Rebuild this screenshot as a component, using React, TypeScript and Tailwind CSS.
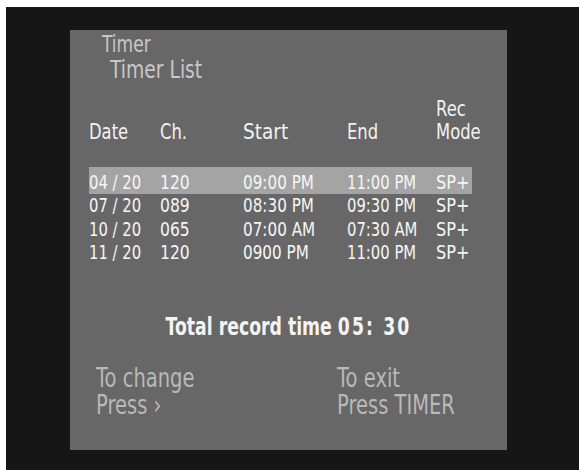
import type { ReactNode } from "react";

const osd = { fontFamily: '"DejaVu Sans", sans-serif' };

type Row = { date: string; ch: string; start: string; end: string; mode: string; active?: boolean };

const rows: Row[] = [
  { date: "04 / 20", ch: "120", start: "09:00 PM", end: "11:00 PM", mode: "SP+", active: true },
  { date: "07 / 20", ch: "089", start: "08:30 PM", end: "09:30 PM", mode: "SP+" },
  { date: "10 / 20", ch: "065", start: "07:00 AM", end: "07:30 AM", mode: "SP+" },
  { date: "11 / 20", ch: "120", start: "0900 PM", end: "11:00 PM", mode: "SP+" },
];

const cols = "grid grid-cols-[71px_83px_104px_89px_1fr]";

/** OSD glyphs are much narrower than anything installed, so squeeze them. */
function Narrow({ children, className = "origin-left scale-x-[0.78]" }: { children: ReactNode; className?: string }) {
  return <span className={`inline-block whitespace-nowrap ${className}`}>{children}</span>;
}

export default function App() {
  return (
    <div className="flex h-[470px] w-[579px] flex-col bg-white pl-[6px] pt-[7px]" style={osd}>
      <div className="flex-1 bg-[#161616] pl-[64px] pt-[23px]">
        <div className="flex h-[420px] w-[437px] flex-col bg-[#676767] pt-[2px]">
          <div className="h-[24px] pl-[32px] text-[23px] leading-[24px] text-[#c8c8c8]">
            <Narrow className="origin-left scale-x-[0.74]">Timer</Narrow>
          </div>
          <div className="mt-[1px] h-[26px] pl-[40px] text-[24px] leading-[26px] text-[#c8c8c8]">
            <Narrow>Timer List</Narrow>
          </div>

          <div className={`${cols} mt-[15px] pl-[19px] text-[21px] leading-[23px] text-[#f2f2f2]`}>
            <div className="self-end"><Narrow>Date</Narrow></div>
            <div className="self-end"><Narrow>Ch.</Narrow></div>
            <div className="self-end"><Narrow className="origin-left scale-x-[0.88]">Start</Narrow></div>
            <div className="self-end"><Narrow>End</Narrow></div>
            <div className="flex flex-col">
              <Narrow>Rec</Narrow>
              <Narrow>Mode</Narrow>
            </div>
          </div>

          <div className="mt-[23px] ml-[19px] w-[383px] text-[19px] leading-[23.33px] text-[#f6f6f6]">
            {rows.map((r) => (
              <div
                key={r.date + r.start}
                className={`${cols} ${r.active ? "bg-[#a4a4a4] pt-[4px]" : ""}`}
              >
                <div><Narrow>{r.date}</Narrow></div>
                <div><Narrow className="origin-left scale-x-[0.82]">{r.ch}</Narrow></div>
                <div><Narrow className="origin-left scale-x-[0.8]">{r.start}</Narrow></div>
                <div><Narrow>{r.end}</Narrow></div>
                <div><Narrow className="origin-left scale-x-[0.85]">{r.mode}</Narrow></div>
              </div>
            ))}
          </div>

          <div className="mt-[49px] h-[28px] text-center text-[24.5px] font-bold leading-[28px] text-[#f4f4f4]">
            <Narrow className="origin-center scale-x-[0.705]">
              Total record time <span className="tracking-[3px]">05: 30</span>
            </Narrow>
          </div>

          <div className="mt-[24px] flex pl-[26px] text-[26px] leading-[27px] text-[#b9b9b9]">
            <div className="flex w-[241px] flex-col">
              <Narrow className="origin-left scale-x-[0.75]">To change</Narrow>
              <Narrow className="origin-left scale-x-[0.75]">Press ›</Narrow>
            </div>
            <div className="flex flex-col">
              <Narrow className="origin-left scale-x-[0.75]">To exit</Narrow>
              <Narrow className="origin-left scale-x-[0.75]">Press TIMER</Narrow>
            </div>
          </div>
        </div>
      </div>
    </div>
  );
}
